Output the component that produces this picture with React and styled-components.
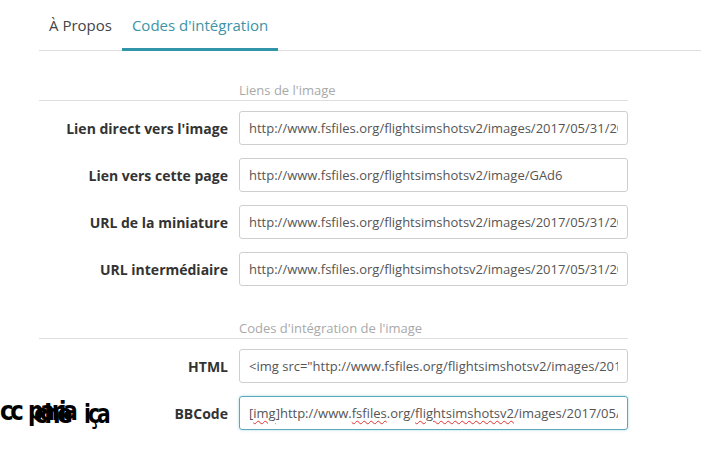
import React from "react";
import styled, { createGlobalStyle } from "styled-components";

const GlobalStyle = createGlobalStyle`
  body {
    margin: 0;
    background: #fff;
    font-family: "Open Sans", "Liberation Sans", sans-serif;
  }
`;

const Page = styled.div`
  position: relative;
  width: 701px;
  height: 465px;
  overflow: hidden;
  background: #fff;
`;

const Tabs = styled.div`
  display: flex;
  margin-left: 39px;
  height: 50px;
  border-bottom: 1px solid #dedede;
`;

const Tab = styled.div`
  padding: 0 10px;
  display: flex;
  align-items: center;
  padding-top: 2px;
  font-size: 15px;
  color: ${({ active }) => (active ? "#3d93a6" : "#444")};
  border-bottom: 3px solid ${({ active }) => (active ? "#3194a8" : "transparent")};
  margin-bottom: -1px;
`;

const Form = styled.div`
  width: 589px;
  margin-left: 39px;
`;

const SectionTitle = styled.div`
  margin-top: ${({ mt }) => mt}px;
  padding-left: 200px;
  height: 20px;
  line-height: 20px;
  font-size: 13px;
  color: #a9a9a9;
  border-bottom: 1px solid #dedede;
  margin-bottom: 10px;
`;

const Row = styled.div`
  display: flex;
  align-items: center;
  margin-bottom: 13px;
`;

const Label = styled.div`
  width: 189px;
  margin-right: 11px;
  text-align: right;
  font-size: 14px;
  font-weight: 700;
  color: #333;
`;

const Input = styled.input`
  box-sizing: border-box;
  width: 389px;
  height: 34px;
  padding: 0 9px;
  border: 1px solid #cfcfcf;
  border-radius: 3px;
  font-family: "Open Sans", "Liberation Sans", sans-serif;
  font-size: 13px;
  color: #555;
  background: #fff;
  outline: none;
`;

const FocusedField = styled.div`
  box-sizing: border-box;
  width: 389px;
  height: 34px;
  padding: 0 9px;
  border: 1px solid #5aa9b8;
  border-radius: 3px;
  box-shadow: 0 0 3px rgba(80, 170, 190, 0.45);
  font-size: 13px;
  line-height: 32px;
  color: #555;
`;

const FieldText = styled.div`
  white-space: nowrap;
  overflow: hidden;
`;

const Misspelled = styled.span`
  text-decoration: underline wavy #e03030;
  text-decoration-thickness: 1px;
  text-underline-offset: 2px;
`;

const Glitch = styled.div`
  position: absolute;
  left: 0;
  top: 394px;
  height: 40px;
  width: 110px;
  font-family: "DejaVu Sans", sans-serif;
  font-weight: 700;
  font-size: 27px;
  line-height: 34px;
  color: #000;
`;

const GlitchLayer = styled.span`
  position: absolute;
  left: ${({ x }) => x}px;
  top: ${({ y }) => y}px;
  letter-spacing: ${({ ls }) => ls}px;
  transform: scaleX(${({ sx }) => sx});
  transform-origin: left center;
`;

const linkRows = [
  ["Lien direct vers l'image", "http://www.fsfiles.org/flightsimshotsv2/images/2017/05/31/2017-05-31_1200.jpg"],
  ["Lien vers cette page", "http://www.fsfiles.org/flightsimshotsv2/image/GAd6"],
  ["URL de la miniature", "http://www.fsfiles.org/flightsimshotsv2/images/2017/05/31/2017-05-31_1200.th.jpg"],
  ["URL intermédiaire", "http://www.fsfiles.org/flightsimshotsv2/images/2017/05/31/2017-05-31_1200.md.jpg"],
];

export default function App() {
  return (
    <Page>
      <GlobalStyle />
      <Tabs>
        <Tab>À Propos</Tab>
        <Tab active>Codes d'intégration</Tab>
      </Tabs>
      <Form>
        <SectionTitle mt={29}>Liens de l'image</SectionTitle>
        {linkRows.map(([label, value]) => (
          <Row key={label}>
            <Label>{label}</Label>
            <Input readOnly value={value} />
          </Row>
        ))}
        <SectionTitle mt={32}>Codes d'intégration de l'image</SectionTitle>
        <Row>
          <Label>HTML</Label>
          <Input
            readOnly
            value={'<img src="http://www.fsfiles.org/flightsimshotsv2/images/2017/05/31/2017-05-31_1200.jpg" alt="" border="0">'}
          />
        </Row>
        <Row>
          <Label>BBCode</Label>
          <FocusedField>
            <FieldText>
              [<Misspelled>img</Misspelled>]http://www.<Misspelled>fsfiles</Misspelled>.org/
              <Misspelled>flightsimshotsv2</Misspelled>/images/2017/05/31/2017-05-31_1200.jpg[/img]
            </FieldText>
          </FocusedField>
        </Row>
      </Form>
      <Glitch>
        <GlitchLayer x={0} y={0} ls={-4} sx={0.85}>cc</GlitchLayer>
        <GlitchLayer x={28} y={0} ls={-4} sx={0.8}>paria</GlitchLayer>
        <GlitchLayer x={34} y={3} ls={-4} sx={0.85}>che</GlitchLayer>
        <GlitchLayer x={84} y={3} ls={-4} sx={0.75}>iça</GlitchLayer>
      </Glitch>
    </Page>
  );
}
